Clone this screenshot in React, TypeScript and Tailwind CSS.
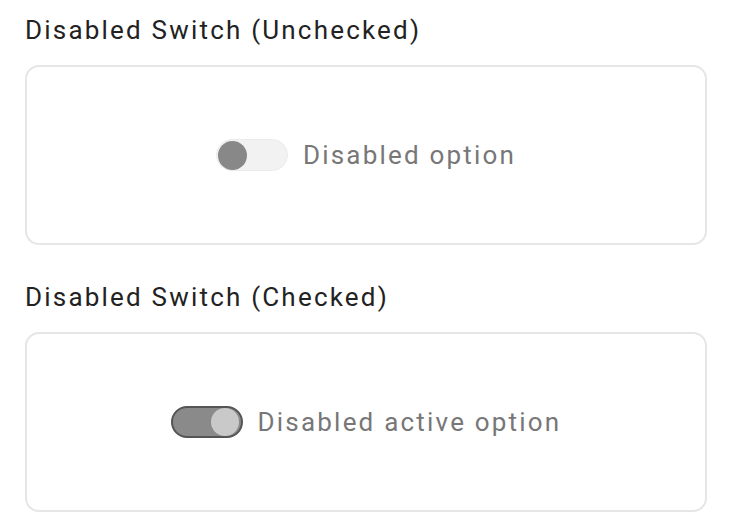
import React from "react"

type SwitchProps = {
    checked: boolean
}

const DisabledSwitch = ({ checked }: SwitchProps) => {
    if (checked) {
        return (
            <span className="flex h-[32px] w-[72px] shrink-0 items-center justify-end rounded-full border-2 border-[#555555] bg-[#8a8a8a] px-[2px]">
                <span className="h-[28px] w-[28px] rounded-full bg-[#c9c9c9]" />
            </span>
        )
    }
    return (
        <span className="flex h-[32px] w-[72px] shrink-0 items-center rounded-full border border-[#ebebeb] bg-[#f2f2f2] px-[1px]">
            <span className="h-[29px] w-[29px] rounded-full bg-[#888888]" />
        </span>
    )
}

const Section = ({ title, label, checked }: { title: string; label: string; checked: boolean }) => (
    <section>
        <h2 className="text-[26px] leading-[39px] text-[#222222] tracking-[2.2px]">{title}</h2>
        <div className="mt-[15px] flex h-[180px] items-center justify-center rounded-[14px] border-2 border-[#e6e6e6]">
            <label className="flex items-center gap-[15px]">
                <DisabledSwitch checked={checked} />
                <span className="text-[26px] leading-[39px] text-[#777777] tracking-[2.2px]">{label}</span>
            </label>
        </div>
    </section>
)

export default function App() {
    return (
        <div className="h-[532px] w-[730px] overflow-hidden bg-white pl-[25px] pr-[23px] pt-[11px] font-['Roboto',sans-serif]">
            <div className="flex flex-col gap-[33px]">
                <Section title="Disabled Switch (Unchecked)" label="Disabled option" checked={false} />
                <Section title="Disabled Switch (Checked)" label="Disabled active option" checked={true} />
            </div>
        </div>
    )
}
